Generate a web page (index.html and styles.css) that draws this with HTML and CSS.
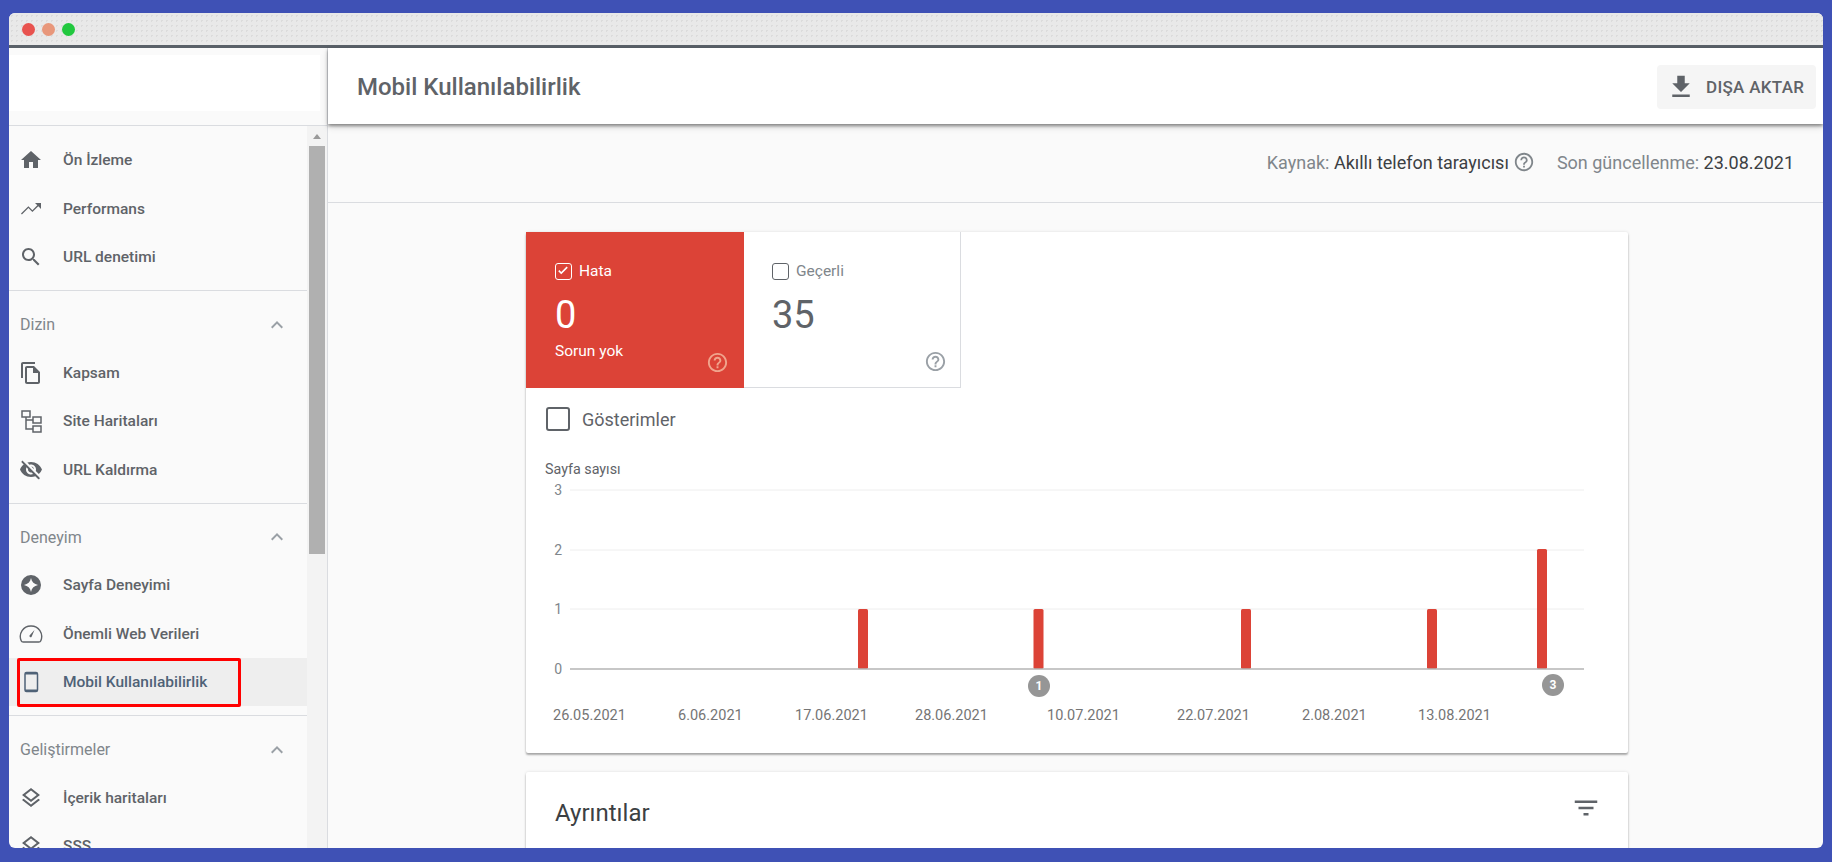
FILE: index.html
```html
<!DOCTYPE html>
<html lang="tr">

<head>
    <meta charset="UTF-8">
    <meta name="viewport" content="width=device-width, initial-scale=1.0">
    <title>Mobil Kullanılabilirlik</title>
    <link rel="stylesheet" href="styles.css">
</head>

<body>
    <svg class="icon-defs" aria-hidden="true">
        <symbol id="i-home" viewBox="0 0 24 24"><path d="M10 20v-6h4v6h5v-8h3L12 3 2 12h3v8z"/></symbol>
        <symbol id="i-trend" viewBox="0 0 24 24"><path d="M16 6l2.290 2.290-4.880 4.880-4-4L2 16.590 2.900 17.500l6.500-6.400 4 4 5.900-5.800L22 12V6z"/></symbol>
        <symbol id="i-search" viewBox="0 0 24 24"><path d="M15.500 14h-.79l-.28-.27C15.410 12.590 16 11.110 16 9.500 16 5.910 13.090 3 9.500 3S3 5.910 3 9.500 5.910 16 9.500 16c1.610 0 3.090-.59 4.230-1.570l.27.280v.79l5 4.990L20.490 19l-4.990-5zm-6 0C7.010 14 5 11.990 5 9.500S7.010 5 9.500 5 14 7.010 14 9.500 11.990 14 9.500 14z"/></symbol>
        <symbol id="i-copy" viewBox="0 0 24 24"><path d="M16 1H4c-1.100 0-2 .9-2 2v14h2V3h12V1zm-1 4H8c-1.100 0-1.990.9-1.990 2L6 21c0 1.100.89 2 1.990 2H19c1.100 0 2-.9 2-2V11l-6-6zM8 21V7h6v5h5v9H8z"/></symbol>
        <symbol id="i-sitemap" viewBox="0 0 24 24"><g fill="none" stroke="currentColor" stroke-width="1.500"><rect x="3" y="2" width="8" height="6"/><rect x="14" y="8" width="8" height="6"/><rect x="14" y="17" width="8" height="6"/><path d="M7 8v12h7M7 11h7"/></g></symbol>
        <symbol id="i-eye" viewBox="0 0 24 24"><path d="M12 6.500c2.760 0 5 2.240 5 5 0 .51-.1 1-.25 1.460l3.060 3.060c1.390-1.230 2.490-2.770 3.180-4.530C21.270 7.110 17 4 12 4c-1.270 0-2.490.2-3.640.57l2.170 2.170c.47-.14.96-.24 1.470-.24zM2.710 3.160c-.39.39-.39 1.020 0 1.410l1.970 1.970C3.060 7.830 1.770 9.530 1 11.500 2.730 15.890 7 19 12 19c1.520 0 2.970-.3 4.310-.82l2.720 2.720c.39.39 1.020.39 1.410 0 .39-.39.39-1.020 0-1.410L4.130 3.160c-.39-.39-1.030-.39-1.420 0zM12 16.500c-2.760 0-5-2.240-5-5 0-.77.18-1.500.49-2.140l1.570 1.570c-.03.18-.06.37-.06.57 0 1.660 1.340 3 3 3 .2 0 .38-.03.56-.07l1.570 1.570c-.65.32-1.370.5-2.130.5zm2.970-5.330c-.15-1.400-1.250-2.490-2.640-2.640l2.640 2.640z"/></symbol>
        <symbol id="i-star" viewBox="0 0 24 24"><path fill-rule="evenodd" d="M12 2a10 10 0 1 0 0 20 10 10 0 0 0 0-20zm0 3c.8 3.900 3.100 6.200 7 7-3.900.8-6.200 3.100-7 7-.8-3.900-3.100-6.200-7-7 3.900-.8 6.200-3.100 7-7z"/></symbol>
        <symbol id="i-gauge" viewBox="0 0 24 24"><g fill="none" stroke="currentColor" stroke-width="1.400"><path d="M4.200 20h15.600c1 0 1.700-.5 2-1.300A10.500 10.500 0 0 0 12 4 10.500 10.500 0 0 0 2.200 18.700c.3.8 1 1.300 2 1.300z"/></g><path d="M10.500 13.500l5-5.500-3 7a1.300 1.300 0 0 1-2-1.500z"/></symbol>
        <symbol id="i-phone" viewBox="0 0 24 24"><g fill="none" stroke="currentColor" stroke-width="1.500"><rect x="6" y="2.500" width="12.500" height="19" rx="1.500"/></g><path d="M6 3h12.500v1.500H6zM6 19.500h12.500V21H6z"/></symbol>
        <symbol id="i-layers" viewBox="0 0 24 24"><path d="M11.990 18.540l-7.370-5.730L3 14.070l9 7 9-7-1.630-1.270zM12 16l7.360-5.730L21 9l-9-7-9 7 1.630 1.270L12 16zm0-11.470L17.740 9 12 13.470 6.260 9 12 4.530z"/></symbol>
        <symbol id="i-less" viewBox="0 0 24 24"><path d="M12 8l-6 6 1.410 1.410L12 10.830l4.590 4.580L18 14z"/></symbol>
        <symbol id="i-download" viewBox="0 0 24 24"><path d="M19 9h-4V3H9v6H5l7 7 7-7zM5 18v2h14v-2H5z"/></symbol>
        <symbol id="i-help" viewBox="0 0 24 24"><path d="M11 18h2v-2h-2v2zm1-16C6.480 2 2 6.480 2 12s4.480 10 10 10 10-4.480 10-10S17.520 2 12 2zm0 18c-4.410 0-8-3.590-8-8s3.590-8 8-8 8 3.590 8 8-3.590 8-8 8zm0-14c-2.210 0-4 1.790-4 4h2c0-1.100.9-2 2-2s2 .9 2 2c0 2-3 1.750-3 5h2c0-2.250 3-2.500 3-5 0-2.210-1.790-4-4-4z"/></symbol>
        <symbol id="i-filter" viewBox="0 0 24 24"><path d="M10 18h4v-2h-4v2zM3 6v2h18V6H3zm3 7h12v-2H6v2z"/></symbol>
        <symbol id="i-check" viewBox="0 0 24 24"><path d="M9 17.500L3.800 12.300l2-2L9 13.500 18.200 4.300l2 2z"/></symbol>
    </svg>

    <div class="window">
        <div class="titlebar">
            <span class="dot dot-red"></span>
            <span class="dot dot-orange"></span>
            <span class="dot dot-green"></span>
        </div>

        <div class="app">
            <aside class="sidebar">
                <div class="logo-area">
                    <div class="logo-box"></div>
                </div>
                <div class="nav-wrap">
                    <nav class="nav">
                        <div class="nav-section first">
                            <a class="nav-item"><svg class="icon"><use href="#i-home"/></svg>Ön İzleme</a>
                            <a class="nav-item"><svg class="icon"><use href="#i-trend"/></svg>Performans</a>
                            <a class="nav-item"><svg class="icon"><use href="#i-search"/></svg>URL denetimi</a>
                        </div>
                        <div class="nav-section">
                            <div class="nav-label">Dizin<svg class="icon chevron"><use href="#i-less"/></svg></div>
                            <a class="nav-item"><svg class="icon"><use href="#i-copy"/></svg>Kapsam</a>
                            <a class="nav-item"><svg class="icon"><use href="#i-sitemap"/></svg>Site Haritaları</a>
                            <a class="nav-item"><svg class="icon"><use href="#i-eye"/></svg>URL Kaldırma</a>
                        </div>
                        <div class="nav-section">
                            <div class="nav-label">Deneyim<svg class="icon chevron"><use href="#i-less"/></svg></div>
                            <a class="nav-item"><svg class="icon"><use href="#i-star"/></svg>Sayfa Deneyimi</a>
                            <a class="nav-item"><svg class="icon"><use href="#i-gauge"/></svg>Önemli Web Verileri</a>
                            <a class="nav-item active"><svg class="icon"><use href="#i-phone"/></svg>Mobil Kullanılabilirlik<span class="red-box"></span></a>
                        </div>
                        <div class="nav-section">
                            <div class="nav-label">Geliştirmeler<svg class="icon chevron"><use href="#i-less"/></svg></div>
                            <a class="nav-item"><svg class="icon"><use href="#i-layers"/></svg>İçerik haritaları</a>
                            <a class="nav-item"><svg class="icon"><use href="#i-layers"/></svg>SSS</a>
                        </div>
                    </nav>
                    <div class="scrollbar">
                        <span class="scroll-up"></span>
                        <span class="scroll-thumb"></span>
                    </div>
                </div>
            </aside>

            <main class="main">
                <header class="page-header">
                    <h1>Mobil Kullanılabilirlik</h1>
                    <button class="export-btn"><svg class="icon"><use href="#i-download"/></svg>DIŞA AKTAR</button>
                </header>

                <div class="sub-header">
                    <span>Kaynak: <b>Akıllı telefon tarayıcısı</b></span>
                    <svg class="icon help-small"><use href="#i-help"/></svg>
                    <span class="updated">Son güncellenme: <b>23.08.2021</b></span>
                </div>

                <div class="content">
                    <section class="card chart-card">
                        <div class="tiles">
                            <div class="tile tile-error">
                                <div class="tile-head"><span class="box checked"><svg class="icon"><use href="#i-check"/></svg></span>Hata</div>
                                <div class="tile-num">0</div>
                                <div class="tile-note">Sorun yok</div>
                                <svg class="icon tile-help"><use href="#i-help"/></svg>
                            </div>
                            <div class="tile tile-valid">
                                <div class="tile-head"><span class="box"></span>Geçerli</div>
                                <div class="tile-num">35</div>
                                <svg class="icon tile-help"><use href="#i-help"/></svg>
                            </div>
                        </div>

                        <div class="impressions"><span class="box big"></span>Gösterimler</div>
                        <div class="axis-title">Sayfa sayısı</div>

                        <svg class="plot" width="1102" height="275">
                            <line class="grid" x1="44" x2="1058" y1="12" y2="12"/>
                            <line class="grid" x1="44" x2="1058" y1="72" y2="72"/>
                            <line class="grid" x1="44" x2="1058" y1="131" y2="131"/>
                            <text class="tick" x="36" y="17">3</text>
                            <text class="tick" x="36" y="77">2</text>
                            <text class="tick" x="36" y="136">1</text>
                            <text class="tick" x="36" y="196">0</text>

                            <rect class="bar" x="332" y="131" width="10" height="60" rx="1.500"/>
                            <rect class="bar" x="507.500" y="131" width="10" height="60" rx="1.500"/>
                            <rect class="bar" x="715" y="131" width="10" height="60" rx="1.500"/>
                            <rect class="bar" x="901" y="131" width="10" height="60" rx="1.500"/>
                            <rect class="bar" x="1011" y="71" width="10" height="120" rx="1.500"/>
                            <line class="baseline" x1="44" x2="1058" y1="191" y2="191"/>

                            <circle class="marker" cx="513" cy="208" r="11"/>
                            <text class="marker-num" x="513" y="212">1</text>
                            <circle class="marker" cx="1027" cy="207" r="11"/>
                            <text class="marker-num" x="1027" y="211">3</text>

                            <text class="date" x="27" y="242">26.05.2021</text>
                            <text class="date" x="152" y="242">6.06.2021</text>
                            <text class="date" x="269" y="242">17.06.2021</text>
                            <text class="date" x="389" y="242">28.06.2021</text>
                            <text class="date" x="521" y="242">10.07.2021</text>
                            <text class="date" x="651" y="242">22.07.2021</text>
                            <text class="date" x="776" y="242">2.08.2021</text>
                            <text class="date" x="892" y="242">13.08.2021</text>
                        </svg>
                    </section>

                    <section class="card details-card">
                        <h2>Ayrıntılar</h2>
                        <svg class="icon filter"><use href="#i-filter"/></svg>
                    </section>
                </div>
            </main>
        </div>
    </div>
</body>

</html>
```

FILE: styles.css
```css
* {
    box-sizing: border-box;
}

html,
body {
    height: 100%;
}

body {
    margin: 0;
    padding: 13px 9px 14px;
    background-color: #3f51b5;
    font-family: Roboto, "Liberation Sans", sans-serif;
    color: #5f6368;
    overflow: hidden;
}

.icon-defs {
    display: none;
}

.icon {
    width: 24px;
    height: 24px;
    fill: currentColor;
    flex: none;
}

.window {
    height: 100%;
    display: flex;
    flex-direction: column;
    background-color: #fafafa;
    border-radius: 6px;
    overflow: hidden;
}

.titlebar {
    height: 35px;
    flex: none;
    display: flex;
    align-items: center;
    gap: 7px;
    padding: 0 0 0 13px;
    background-color: #e9e9e9;
    background-image: radial-gradient(#dcdcdc 1px, transparent 1px);
    background-size: 5px 5px;
    border-bottom: 3px solid #596068;
}

.dot {
    width: 13px;
    height: 13px;
    border-radius: 50%;
}

.dot-red {
    background-color: #e8534f;
}

.dot-orange {
    background-color: #e8977b;
}

.dot-green {
    background-color: #22c83f;
}

.app {
    flex: 1;
    min-height: 0;
    display: flex;
}

/* sidebar */
.sidebar {
    width: 319px;
    flex: none;
    display: flex;
    flex-direction: column;
    border-right: 1px solid #dadce0;
}

.logo-area {
    height: 78px;
    flex: none;
    padding: 7px 7px 14px 0;
    border-bottom: 1px solid #dadce0;
}

.logo-box {
    height: 100%;
    background-color: #fff;
}

.nav-wrap {
    flex: 1;
    min-height: 0;
    display: flex;
}

.nav {
    width: 298px;
    flex: none;
}

.nav-section {
    padding: 10px 0 9px;
    border-bottom: 1px solid #dadce0;
}

.nav-item {
    position: relative;
    height: 48.4px;
    display: flex;
    align-items: center;
    gap: 20px;
    padding-left: 10px;
    font-size: 15.5px;
    font-weight: 500;
    color: #5f6368;
}

.nav-item.active {
    background-color: #eeeeee;
    color: #4f6277;
}

.red-box {
    position: absolute;
    left: 8px;
    top: 0;
    width: 224px;
    height: 49px;
    border: 3px solid #f00;
    border-radius: 2px;
}

.nav-label {
    height: 47.4px;
    display: flex;
    align-items: center;
    justify-content: space-between;
    padding: 0 18px 0 11px;
    font-size: 16px;
    color: #80868b;
}

.chevron {
    fill: #9aa0a6;
}

.scrollbar {
    width: 20px;
    flex: none;
    display: flex;
    flex-direction: column;
    align-items: center;
    background-color: #f3f3f3;
}

.scroll-up {
    width: 0;
    height: 0;
    margin: 8px 0 7px;
    border: 4px solid transparent;
    border-top: 0;
    border-bottom: 5px solid #9a9a9a;
}

.scroll-thumb {
    width: 16px;
    height: 408px;
    background-color: #b0b0b0;
}

/* main area */
.main {
    flex: 1;
    min-width: 0;
    display: flex;
    flex-direction: column;
}

.page-header {
    position: relative;
    height: 76px;
    flex: none;
    display: flex;
    align-items: center;
    justify-content: space-between;
    padding: 1px 7px 0 29px;
    background-color: #fff;
    box-shadow: 0 2px 3px rgba(0, 0, 0, .4), 0 3px 7px rgba(0, 0, 0, .14);
}

.page-header h1 {
    margin: 0;
    font-size: 24px;
    font-weight: 500;
    color: #5f6368;
}

.export-btn {
    width: 159px;
    height: 44px;
    display: flex;
    align-items: center;
    gap: 10px;
    padding: 0 0 0 9px;
    border: none;
    border-radius: 4px;
    background-color: #f5f5f5;
    font-family: inherit;
    font-size: 17px;
    font-weight: 500;
    letter-spacing: .3px;
    color: #5f6368;
}

.export-btn .icon {
    width: 30px;
    height: 30px;
}

.sub-header {
    height: 79px;
    flex: none;
    display: flex;
    align-items: center;
    justify-content: flex-end;
    padding: 0 29px 2px 0;
    border-bottom: 1px solid #dadce0;
    font-size: 18px;
    color: #80868b;
}

.sub-header b {
    font-weight: 400;
    color: #3c4043;
}

.help-small {
    width: 22px;
    height: 22px;
    margin-left: 4px;
}

.updated {
    margin-left: 22px;
}

.content {
    flex: 1;
    min-height: 0;
    padding: 29px 195px 0 198px;
}

.card {
    position: relative;
    background-color: #fff;
    border-radius: 2px;
    box-shadow: 0 2px 2px rgba(0, 0, 0, .3), 0 0 3px rgba(0, 0, 0, .12);
}

.chart-card {
    height: 521px;
}

.tiles {
    display: flex;
    height: 156px;
}

.tile {
    position: relative;
    width: 217px;
    padding: 26px 0 0 29px;
}

.tile-error {
    width: 218px;
    background-color: #dc4337;
    color: #fff;
}

.tile-valid {
    padding-left: 28px;
    border-right: 1px solid #dadce0;
    border-bottom: 1px solid #dadce0;
    color: #80868b;
}

.tile-head {
    display: flex;
    align-items: center;
    gap: 7px;
    font-size: 15.5px;
    line-height: 27px;
}

.box {
    width: 17px;
    height: 17px;
    display: flex;
    border: 1.5px solid #5f6368;
    border-radius: 3px;
}

.tile-error .box {
    border-color: #fff;
}

.box .icon {
    width: 14px;
    height: 14px;
    fill: #fff;
}

.tile-num {
    margin-top: 7px;
    font-size: 38px;
    line-height: 46px;
}

.tile-valid .tile-num {
    color: #5f6368;
}

.tile-note {
    margin-top: 1px;
    font-size: 15.5px;
    line-height: 24px;
}

.tile-help {
    position: absolute;
    right: 15px;
    bottom: 14px;
    width: 23px;
    height: 23px;
}

.tile-error .tile-help {
    fill: #f0a48d;
}

.tile-valid .tile-help {
    right: 13px;
    fill: #9aa0a6;
}

.impressions {
    height: 62px;
    display: flex;
    align-items: center;
    gap: 12px;
    padding-left: 20px;
    font-size: 18px;
    color: #5f6368;
}

.box.big {
    width: 24px;
    height: 24px;
    border-width: 2px;
}

.axis-title {
    height: 28px;
    padding: 10px 0 0 19px;
    font-size: 14.3px;
    line-height: 18px;
    color: #5f6368;
}

.plot {
    display: block;
}

.grid {
    stroke: #eeeeee;
    stroke-width: 1;
}

.baseline {
    stroke: #b5b5b5;
    stroke-width: 1.5;
}

.tick {
    font-size: 14px;
    fill: #80868b;
    text-anchor: end;
}

.date {
    font-size: 14.5px;
    fill: #757575;
}

.bar {
    fill: #dc4337;
}

.marker {
    fill: #969696;
}

.marker-num {
    font-size: 12px;
    font-weight: 700;
    fill: #fff;
    text-anchor: middle;
}

.details-card {
    height: 120px;
    margin-top: 19px;
    padding: 23px 29px;
}

.details-card h2 {
    margin: 0;
    font-size: 24px;
    font-weight: 400;
    line-height: 36px;
    color: #3c4043;
}

.filter {
    position: absolute;
    top: 21px;
    right: 27px;
    width: 30px;
    height: 30px;
    fill: #5f6368;
}
```
